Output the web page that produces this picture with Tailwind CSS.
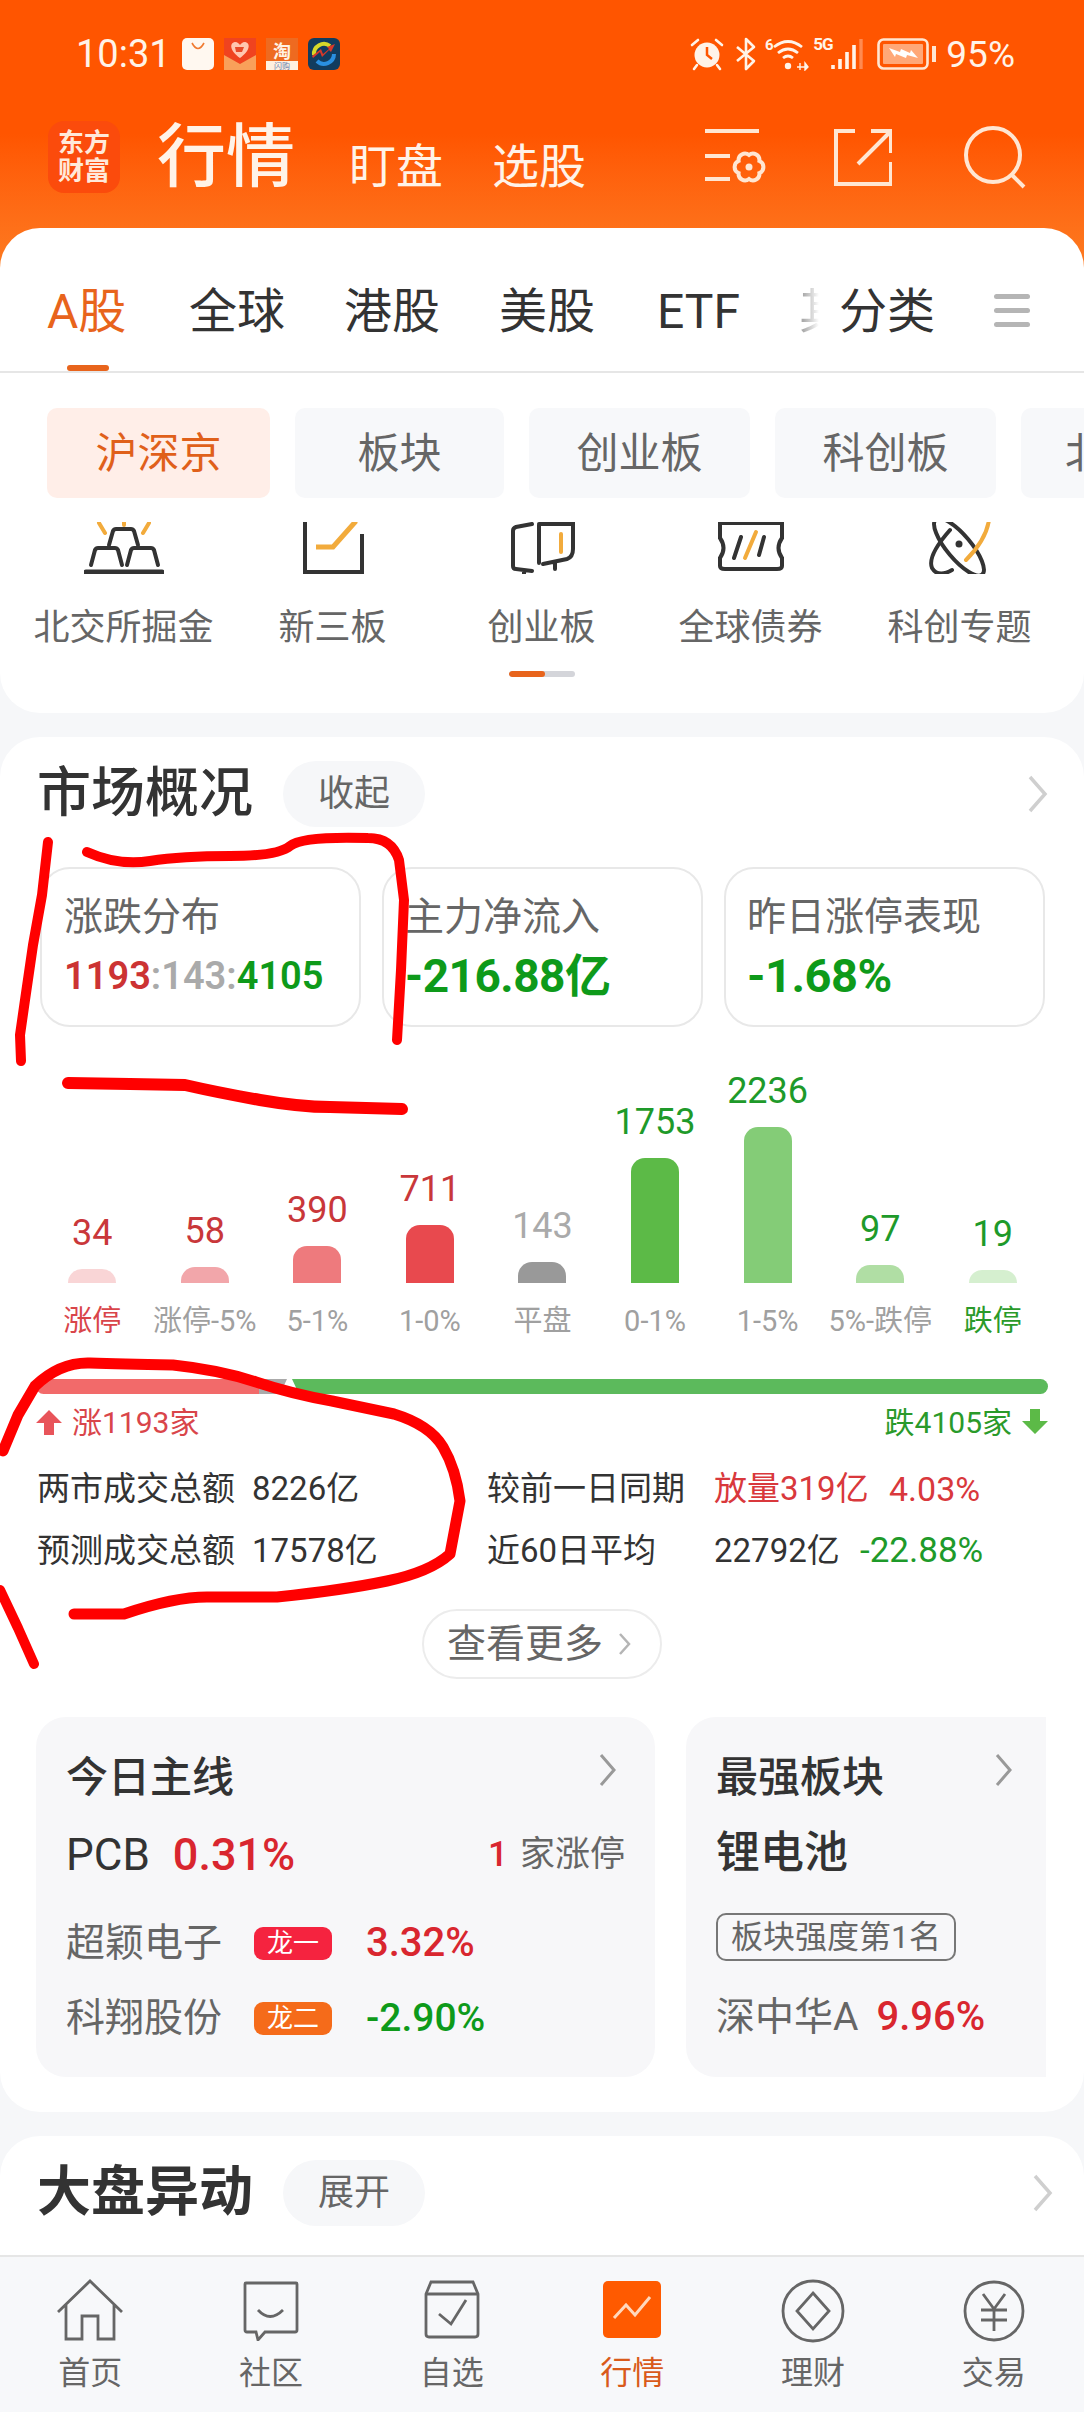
<!DOCTYPE html>
<html lang="zh-CN">
<head>
  <meta charset="UTF-8" />
  <title>行情</title>
  <script src="https://cdn.jsdelivr.net/npm/@tailwindcss/browser@4"></script>
</head>
<body class="bg-[#f6f7f9]">
<div class="relative w-[1084px] h-[2412px] overflow-hidden flex flex-col bg-[#f6f7f9] text-[#333] [font-family:Roboto,'Noto_Sans_CJK_SC',sans-serif]">

  <!-- orange header -->
  <div class="h-[268px] shrink-0 bg-linear-to-b from-[#ff5500] from-50% to-[#fd7a20] text-[#fff3e8]">
    <!-- status bar -->
    <div class="h-[108px] flex items-center pl-[76px]">
      <span class="text-[38px] leading-none w-[106px]">10:31</span>
      <div class="flex gap-[10px]">
        <svg width="32" height="32" viewBox="0 0 32 32"><rect width="32" height="32" rx="5" fill="#fff8f0"/><path d="M10 5q6 11 12 0" fill="none" stroke="#f07a30" stroke-width="1.6"/></svg>
        <svg width="32" height="32" viewBox="0 0 32 32"><path d="M0 0h32v32H0z" fill="#f0431f"/><path d="M0 17l16 9 16-9v15H0z" fill="#f9a05a"/><path d="M16 20C6 13 5 5 11 4c3 0 4 2 5 3 1-1 2-3 5-3 6 1 5 9-5 16z" fill="#ffc7b0"/><path d="M11 9h9l-2 5h-6z" fill="#e84a2a"/></svg>
        <svg width="32" height="32" viewBox="0 0 32 32"><rect width="32" height="32" fill="#ee6a20"/><rect y="23" width="32" height="9" fill="#fff0e0"/><text x="16" y="20" text-anchor="middle" font-size="18" font-weight="700" fill="#fff3e4">淘</text><text x="16" y="31" text-anchor="middle" font-size="8" fill="#6a7fb0">闪购</text></svg>
        <svg width="32" height="32" viewBox="0 0 32 32"><rect width="32" height="32" rx="6" fill="#123c5e"/><path d="M6 17A10 10 0 0 1 22 8" fill="none" stroke="#d6d92a" stroke-width="4"/><path d="M26 16A10 10 0 0 1 9 23" fill="none" stroke="#2a8fe0" stroke-width="4"/><path d="M5 20l7-6 2 5 7-7 2 2 4-8-8 3 2 2-6 5-2-5-9 7z" fill="#d8392a"/></svg>
      </div>
      <div class="ml-auto flex items-center pr-[69px]">
        <!-- alarm -->
        <svg width="34" height="34" viewBox="0 0 34 34" class="mr-[10px]"><circle cx="17" cy="18" r="12.5" fill="#fff3e8"/><path d="M17 10v8l5 4" fill="none" stroke="#ff5500" stroke-width="2.5"/><path d="M2 8l6-5M32 8l-6-5M7 28l-3 4M27 28l3 4" stroke="#fff3e8" stroke-width="2.6" stroke-linecap="round"/></svg>
        <!-- bluetooth -->
        <svg width="24" height="34" viewBox="0 0 24 34" class="mr-[7px]"><path d="M3 10l17 14-8 8V2l8 8L3 24" fill="none" stroke="#fff3e8" stroke-width="2.6" stroke-linejoin="round"/></svg>
        <!-- wifi -->
        <svg width="44" height="34" viewBox="0 0 44 34" class="mr-[4px]"><text x="0" y="13" font-size="15" font-weight="700" fill="#fff3e8">6</text><path d="M9 10q14-11 28 0M13 16q10-8 20 0M18 21q5-4 10 0" fill="none" stroke="#fff3e8" stroke-width="2.8"/><circle cx="23" cy="29" r="3.2" fill="#fff3e8"/><path d="M32 30h8M35 26v7M40 26l3 4-3 3z" stroke="#fff3e8" stroke-width="1.4" fill="#fff3e8"/></svg>
        <!-- signal -->
        <div class="relative w-[52px] h-[34px] mr-[12px]">
          <span class="absolute left-0 -top-[1px] text-[17px] leading-[17px] font-bold tracking-[-1px]">5G</span>
          <svg width="52" height="34" viewBox="0 0 52 34" class="absolute left-0 top-0"><path d="M20 28v4M27 22v10M34 15v17M41 8v24" stroke="#fff3e8" stroke-width="3.6"/><path d="M48 2v30" stroke="#ff8a50" stroke-width="3.4"/></svg>
        </div>
        <!-- battery -->
        <svg width="60" height="34" viewBox="0 0 60 34" class="mr-[9px]"><rect x="1.5" y="2.5" width="49" height="29" rx="5" fill="none" stroke="#ffe6d2" stroke-width="2.6"/><rect x="6" y="7" width="40" height="20" rx="1" fill="#ffa878"/><path d="M55 9h4v16h-4z" fill="#ffe6d2"/><path d="M12 11l11 4 1-3 9 4 1-3 7 8-11-3-1 3-10-4-1 3z" fill="#fff"/></svg>
        <span class="text-[37px] leading-none">95%</span>
      </div>
    </div>
    <!-- title row -->
    <div class="h-[90px] flex items-center pl-[48px] pt-[8px]">
      <div class="w-[72px] h-[72px] rounded-[16px] bg-[#fb4b0c] flex items-center justify-center text-center text-[26px] leading-[28px] font-bold text-[#ffe9da]">东方<br>财富</div>
      <span class="ml-[37px] text-[69px] leading-none font-medium">行情</span>
      <span class="ml-[54px] text-[47px] leading-none mt-[18px]">盯盘</span>
      <span class="ml-[49px] text-[47px] leading-none mt-[18px]">选股</span>
      <div class="ml-auto flex items-center pr-[58px] text-[#ffe6d2]">
        <svg width="64" height="58" viewBox="0 0 64 58" class="mr-[66px]" fill="none" stroke="#ffe6d2" stroke-width="4"><path d="M1 3h54M1 28h25M1 51h25"/><path d="M45 27A6.5 6.5 0 0 1 55.4 33A6.5 6.5 0 0 1 55.4 45A6.5 6.5 0 0 1 45 51A6.5 6.5 0 0 1 34.6 45A6.5 6.5 0 0 1 34.6 33A6.5 6.5 0 0 1 45 27Z"/><circle cx="45" cy="39" r="3.5" fill="#ffe6d2" stroke="none"/></svg>
        <svg width="58" height="58" viewBox="0 0 58 58" class="mr-[72px]" fill="none" stroke="#ffe6d2" stroke-width="4"><path d="M21 3H2v53h55V34"/><path d="M37 3h20v22M55 5L24 36"/></svg>
        <svg width="62" height="64" viewBox="0 0 62 64" fill="none" stroke="#ffe6d2" stroke-width="4"><circle cx="29" cy="30" r="27"/><path d="M48 50l12 12"/></svg>
      </div>
    </div>
  </div>

  <!-- market tabs card -->
  <section class="relative -mt-[40px] h-[485px] shrink-0 bg-white rounded-[40px] overflow-hidden">
    <div class="relative h-[145px] border-b-[2px] border-[#e6e6e6] flex items-start pl-[47px] pt-[55px] text-[48px] leading-[58px]">
      <span class="text-[#e8641c] w-[142px]">A股</span>
      <span class="w-[155px]">全球</span>
      <span class="w-[155px]">港股</span>
      <span class="w-[158px]">美股</span>
      <span class="w-[142px]">ETF</span>
      <span class="w-[40px] overflow-hidden bg-linear-to-r from-[#aaa] from-10% to-white to-50% bg-clip-text text-transparent">其</span>
      <span class="w-[155px]">分类</span>
      <div class="flex flex-col gap-[9px] w-[36px] mt-[11px]">
        <span class="h-[5px] rounded-full bg-[#b5b5b5]"></span>
        <span class="h-[5px] rounded-full bg-[#b5b5b5]"></span>
        <span class="h-[5px] rounded-full bg-[#b5b5b5]"></span>
      </div>
      <span class="absolute left-[67px] bottom-0 w-[42px] h-[6px] rounded-full bg-[#e8641c]"></span>
    </div>
    <div class="flex gap-[25px] pl-[47px] mt-[35px] text-[42px] text-[#666]">
      <div class="w-[223px] h-[90px] shrink-0 rounded-[10px] bg-[#ffeee8] text-[#e0601a] flex items-center justify-center">沪深京</div>
      <div class="w-[209px] h-[90px] shrink-0 rounded-[10px] bg-[#f7f8fa] flex items-center justify-center">板块</div>
      <div class="w-[221px] h-[90px] shrink-0 rounded-[10px] bg-[#f7f8fa] flex items-center justify-center">创业板</div>
      <div class="w-[221px] h-[90px] shrink-0 rounded-[10px] bg-[#f7f8fa] flex items-center justify-center">科创板</div>
      <div class="w-[221px] h-[90px] shrink-0 rounded-[10px] bg-[#f7f8fa] flex items-center pl-[44px]">北交所</div>
    </div>
    <div class="grid grid-cols-[209px_209px_209px_209px_209px] pl-[19px] mt-[24px] text-[36px] leading-[44px] text-[#666] text-center">
      <div class="flex flex-col items-center">
        <svg width="80" height="52" viewBox="0 0 80 52" fill="none" stroke="#333" stroke-width="4" stroke-linecap="round">
          <path d="M2 50h76" stroke-width="5"/>
          <path d="M7 43l4-15q1-2 3-2h17q2 0 3 2l4 15M43 43l4-15q1-2 3-2h17q2 0 3 2l4 15M25 23l4-14q1-2 3-2h15q2 0 3 2l4 14"/>
          <path d="M15 1l6 10M65 1l-6 10M40 0v3" stroke="#f2ab3c"/>
        </svg>
        <span class="mt-[32px]">北交所掘金</span>
      </div>
      <div class="flex flex-col items-center">
        <svg width="64" height="52" viewBox="0 0 64 52" fill="none" stroke="#333" stroke-width="4">
          <path d="M4 0v50h57V12"/>
          <path d="M15 25h17L55-1" stroke="#f2ab3c" stroke-width="5"/>
        </svg>
        <span class="mt-[32px]">新三板</span>
      </div>
      <div class="flex flex-col items-center">
        <svg width="68" height="52" viewBox="0 0 68 52" fill="none" stroke="#333" stroke-width="4" stroke-linecap="round">
          <path d="M24 2L8 5Q5 6 5 9v35q0 3 3 3l16 2M16 48v4"/>
          <path d="M31 3v38M31 2h34v25q0 8-6 10l-24 5M47 41v6"/>
          <path d="M53 12v18" stroke="#f2ab3c"/>
        </svg>
        <span class="mt-[32px]">创业板</span>
      </div>
      <div class="flex flex-col items-center">
        <svg width="68" height="52" viewBox="0 0 68 52" fill="none" stroke="#333" stroke-width="4" stroke-linecap="round">
          <path d="M3 1h62v15q-7 10 0 20v8q0 3-5 3H8q-5 0-5-3v-8q7-10 0-20z"/>
          <path d="M24 15l-7 21M47 15l-5 18"/>
          <path d="M39 10L28 36" stroke="#f2ab3c"/>
        </svg>
        <span class="mt-[32px]">全球债券</span>
      </div>
      <div class="flex flex-col items-center">
        <svg width="64" height="52" viewBox="0 0 64 52" fill="none" stroke="#333" stroke-width="4" stroke-linecap="round">
          <ellipse cx="31" cy="25" rx="12" ry="36" transform="rotate(-40 31 25)"/>
          <path d="M24 48Q10 56 4 46Q-1 34 22 8"/>
          <path d="M61-2Q58 18 38 38" stroke="#f2ab3c"/>
          <circle cx="31" cy="22" r="3.5" fill="#333" stroke="none"/>
        </svg>
        <span class="mt-[32px]">科创专题</span>
      </div>
    </div>
    <div class="ml-[509px] mt-[21px] flex w-[66px] h-[6px] rounded-full overflow-hidden bg-[#d4d5da]">
      <span class="w-[36px] rounded-full bg-[#e8641c]"></span>
    </div>
  </section>

  <!-- market overview card -->
  <section class="mt-[24px] h-[1375px] shrink-0 bg-white rounded-[40px] overflow-hidden">
    <div class="flex items-center h-[66px] mt-[24px] pl-[37px] pr-[36px]">
      <h2 class="text-[54px] leading-none font-medium">市场概况</h2>
      <span class="ml-[30px] w-[142px] h-[66px] rounded-full bg-[#f6f7f9] flex items-center justify-center text-[36px] text-[#666]">收起</span>
      <svg width="20" height="38" viewBox="0 0 20 38" class="ml-auto" fill="none" stroke="#cfcfcf" stroke-width="3.5"><path d="M2 2l15 17L2 36"/></svg>
    </div>

    <div class="flex gap-[21px] pl-[40px] mt-[40px]">
      <div class="w-[321px] h-[160px] rounded-[30px] border-[2px] border-[#e8e8e8] pl-[22px] pt-[23px]">
        <div class="text-[39px] leading-[50px] text-[#666]">涨跌分布</div>
        <div class="text-[38px] leading-[50px] mt-[9px] font-semibold"><span class="text-[#cc3333]">1193</span><span class="text-[#aaa]">:143:</span><span class="text-[#0e9a1a]">4105</span></div>
      </div>
      <div class="w-[321px] h-[160px] rounded-[30px] border-[2px] border-[#e8e8e8] pl-[21px] pt-[23px]">
        <div class="text-[39px] leading-[50px] text-[#666]">主力净流入</div>
        <div class="text-[46px] leading-[50px] mt-[9px] font-bold text-[#0e9a1a] tracking-[-0.5px]">-216.88亿</div>
      </div>
      <div class="w-[321px] h-[160px] rounded-[30px] border-[2px] border-[#e8e8e8] pl-[21px] pt-[23px]">
        <div class="text-[39px] leading-[50px] text-[#666]">昨日涨停表现</div>
        <div class="text-[47px] leading-[50px] mt-[9px] font-bold text-[#0e9a1a] tracking-[-0.5px]">-1.68%</div>
      </div>
    </div>

    <!-- bar chart -->
    <div class="grid grid-cols-9 w-[1013px] ml-[36px] h-[256px] items-end text-center text-[36px] leading-[36px]">
      <div class="flex flex-col items-center text-[#c9373a]"><span>34</span><span class="mt-[18px] w-[48px] h-[14px] rounded-t-[14px] bg-[#f9d5d6]"></span></div>
      <div class="flex flex-col items-center text-[#c9373a]"><span>58</span><span class="mt-[18px] w-[48px] h-[16px] rounded-t-[14px] bg-[#f2a6aa]"></span></div>
      <div class="flex flex-col items-center text-[#c9373a]"><span>390</span><span class="mt-[18px] w-[48px] h-[37px] rounded-t-[14px] bg-[#ee7a7d]"></span></div>
      <div class="flex flex-col items-center text-[#c9373a]"><span>711</span><span class="mt-[18px] w-[48px] h-[58px] rounded-t-[14px] bg-[#e8494e]"></span></div>
      <div class="flex flex-col items-center text-[#aaa]"><span>143</span><span class="mt-[18px] w-[48px] h-[21px] rounded-t-[14px] bg-[#999]"></span></div>
      <div class="flex flex-col items-center text-[#1e9a2a]"><span>1753</span><span class="mt-[18px] w-[48px] h-[125px] rounded-t-[14px] bg-[#5cba47]"></span></div>
      <div class="flex flex-col items-center text-[#1e9a2a]"><span>2236</span><span class="mt-[18px] w-[48px] h-[156px] rounded-t-[14px] bg-[#84cc77]"></span></div>
      <div class="flex flex-col items-center text-[#1e9a2a]"><span>97</span><span class="mt-[18px] w-[48px] h-[18px] rounded-t-[14px] bg-[#b0dea4]"></span></div>
      <div class="flex flex-col items-center text-[#1e9a2a]"><span>19</span><span class="mt-[18px] w-[48px] h-[13px] rounded-t-[14px] bg-[#d5efcf]"></span></div>
    </div>
    <div class="grid grid-cols-9 w-[1013px] ml-[36px] h-[78px] items-center text-center text-[29px] text-[#a0a0a0] whitespace-nowrap">
      <span class="text-[#d9454a]">涨停</span>
      <span>涨停-5%</span>
      <span>5-1%</span>
      <span>1-0%</span>
      <span>平盘</span>
      <span>0-1%</span>
      <span>1-5%</span>
      <span>5%-跌停</span>
      <span class="text-[#2a9a2a]">跌停</span>
    </div>

    <!-- ratio bar -->
    <div class="flex w-[1012px] h-[15px] ml-[36px] mt-[18px] rounded-full overflow-hidden">
      <span class="w-[223px] bg-[#f26a6a]"></span>
      <span class="w-[28px] bg-[#aaa] [clip-path:polygon(0_0,100%_0,75%_100%,0_100%)]"></span>
      <span class="flex-1 ml-[5px] bg-[#5cba5c] [clip-path:polygon(0_0,100%_0,100%_100%,7px_100%)]"></span>
    </div>
    <div class="flex items-center h-[34px] mt-[11px] px-[36px] text-[30px]">
      <svg width="26" height="26" viewBox="0 0 26 26" class="mr-[10px]"><path d="M13 1L26 14h-8v12H8V14H0z" fill="#e8545a"/></svg>
      <span class="text-[#d9454a]">涨1193家</span>
      <span class="ml-auto text-[#2a9a2a]">跌4105家</span>
      <svg width="26" height="26" viewBox="0 0 26 26" class="ml-[10px]"><path d="M13 25L26 12h-8V0H8v12H0z" fill="#5cba47"/></svg>
    </div>

    <!-- turnover stats -->
    <div class="mt-[19px] pl-[37px] text-[33px] text-[#333] whitespace-nowrap">
      <div class="flex items-center h-[62px]">
        <span class="w-[215px]">两市成交总额</span><span class="w-[235px]">8226亿</span>
        <span class="w-[227px]">较前一日同期</span><span class="w-[175px] text-[#d9383c]">放量319亿</span><span class="text-[34px] text-[#d9383c]">4.03%</span>
      </div>
      <div class="flex items-center h-[62px]">
        <span class="w-[215px]">预测成交总额</span><span class="w-[235px]">17578亿</span>
        <span class="w-[227px]">近60日平均</span><span class="w-[146px]">22792亿</span><span class="text-[35px] text-[#1e9a2a]">-22.88%</span>
      </div>
    </div>

    <div class="flex justify-center mt-[27px]">
      <div class="w-[240px] h-[70px] rounded-full border-[2px] border-[#ececec] flex items-center pl-[23px] text-[39px] text-[#666]">
        查看更多
        <svg width="14" height="24" viewBox="0 0 14 24" class="ml-[15px]" fill="none" stroke="#b5b5b5" stroke-width="2.5"><path d="M2 2l9 10-9 10"/></svg>
      </div>
    </div>

    <!-- sector cards -->
    <div class="flex gap-[31px] ml-[36px] mt-[38px] w-[1010px] overflow-hidden">
      <div class="w-[619px] h-[360px] shrink-0 rounded-[30px] bg-[#f7f7f9] pl-[30px] pr-[38px] pt-[30px]">
        <div class="flex items-center justify-between h-[60px]">
          <span class="text-[42px] font-medium">今日主线</span>
          <svg width="18" height="34" viewBox="0 0 18 34" class="-mt-[14px]" fill="none" stroke="#999" stroke-width="3"><path d="M2 2l13 15L2 32"/></svg>
        </div>
        <div class="flex items-center h-[60px] mt-[18px]">
          <span class="text-[44px]">PCB</span>
          <span class="ml-[23px] text-[45px] font-medium text-[#d9262f]">0.31%</span>
          <span class="ml-auto text-[35px] font-medium text-[#d9262f]">1</span>
          <span class="ml-[12px] text-[35px] text-[#666] -mr-[8px]">家涨停</span>
        </div>
        <div class="flex items-center h-[50px] mt-[33px]">
          <span class="text-[39px] text-[#666] w-[188px]">超颖电子</span>
          <span class="w-[78px] h-[33px] rounded-[9px] bg-[#f5233f] text-white text-[26px] leading-none flex items-center justify-center">龙一</span>
          <span class="ml-[34px] text-[40px] font-medium text-[#d9262f]">3.32%</span>
        </div>
        <div class="flex items-center h-[50px] mt-[25px]">
          <span class="text-[39px] text-[#666] w-[188px]">科翔股份</span>
          <span class="w-[78px] h-[33px] rounded-[9px] bg-[#f56b1a] text-white text-[26px] leading-none flex items-center justify-center">龙二</span>
          <span class="ml-[34px] text-[39px] font-medium text-[#0e9a1a]">-2.90%</span>
        </div>
      </div>
      <div class="w-[400px] h-[360px] shrink-0 rounded-[30px] bg-[#f7f7f9] pl-[30px] pt-[30px]">
        <div class="flex items-center justify-between h-[60px] w-[297px]">
          <span class="text-[42px] font-medium">最强板块</span>
          <svg width="18" height="34" viewBox="0 0 18 34" class="-mt-[14px]" fill="none" stroke="#999" stroke-width="3"><path d="M2 2l13 15L2 32"/></svg>
        </div>
        <div class="h-[60px] mt-[16px] flex items-center text-[44px] font-medium">锂电池</div>
        <div class="mt-[30px] w-[240px] h-[48px] rounded-[10px] border-[2px] border-[#777] flex items-center justify-center text-[32px] leading-none text-[#666] whitespace-nowrap">板块强度第1名</div>
        <div class="flex items-center h-[50px] mt-[31px]">
          <span class="text-[39px] text-[#666]">深中华A</span>
          <span class="ml-[18px] text-[40px] font-medium text-[#d9262f]">9.96%</span>
        </div>
      </div>
    </div>
  </section>

  <!-- market movers card, cut off by nav -->
  <section class="mt-[24px] flex-1 min-h-0 bg-white rounded-t-[40px] overflow-hidden pt-[24px] pl-[37px] pr-[31px]">
    <div class="flex items-center h-[66px]">
      <h2 class="text-[54px] leading-none font-bold">大盘异动</h2>
      <span class="ml-[30px] w-[142px] h-[66px] rounded-full bg-[#f6f7f9] flex items-center justify-center text-[36px] text-[#666]">展开</span>
      <svg width="20" height="38" viewBox="0 0 20 38" class="ml-auto" fill="none" stroke="#cfcfcf" stroke-width="3.5"><path d="M2 2l15 17L2 36"/></svg>
    </div>
  </section>

  <!-- bottom nav -->
  <nav class="h-[157px] shrink-0 grid grid-cols-6 border-t-[2px] border-[#e6e6e6] bg-[#f7f8fa] pt-[22px] text-center text-[32px] leading-[40px] text-[#666]">
    <div class="flex flex-col items-center">
      <svg width="70" height="62" viewBox="0 0 70 62" fill="none" stroke="#666" stroke-width="2.8"><path d="M3 33L35 2l32 31M11 25v35h16V37h16v23h16V25"/></svg>
      <span class="mt-[12px]">首页</span>
    </div>
    <div class="flex flex-col items-center">
      <svg width="60" height="62" viewBox="0 0 60 62" fill="none" stroke="#666" stroke-width="2.8"><path d="M5 4h50a1 1 0 0 1 1 1v46q0 2-2 2H24l-7 8-2-8H6q-2 0-2-2V5a1 1 0 0 1 1-1z"/><path d="M17 31q12 13 25 0"/></svg>
      <span class="mt-[12px]">社区</span>
    </div>
    <div class="flex flex-col items-center">
      <svg width="60" height="62" viewBox="0 0 60 62" fill="none" stroke="#666" stroke-width="2.8"><path d="M4 15L9 3h42l5 12v40q0 3-3 3H7q-3 0-3-3z"/><path d="M4 15h52"/><path d="M17 35l12 10 15-24"/></svg>
      <span class="mt-[12px]">自选</span>
    </div>
    <div class="flex flex-col items-center text-[#d95a1a]">
      <svg width="60" height="62" viewBox="0 0 60 62"><rect x="1" y="2" width="58" height="57" rx="5" fill="#ff5a00"/><path d="M12 39l12-13 9 10 15-18" fill="none" stroke="#ffd8bd" stroke-width="3"/></svg>
      <span class="mt-[12px]">行情</span>
    </div>
    <div class="flex flex-col items-center">
      <svg width="66" height="64" viewBox="0 0 66 64" fill="none" stroke="#666" stroke-width="2.8"><ellipse cx="33" cy="32" rx="30" ry="30"/><path d="M33 14l16 18-16 18-16-18z"/></svg>
      <span class="mt-[10px]">理财</span>
    </div>
    <div class="flex flex-col items-center">
      <svg width="64" height="64" viewBox="0 0 64 64" fill="none" stroke="#666" stroke-width="2.8"><circle cx="32" cy="32" r="29"/><path d="M21 15l11 15 11-15M19 31h26M19 41h26M32 30v22"/></svg>
      <span class="mt-[10px]">交易</span>
    </div>
  </nav>

  <!-- red marker scribbles on top of the screenshot -->
  <svg class="absolute left-0 top-0 pointer-events-none" width="1084" height="2412" viewBox="0 0 1084 2412" fill="none" stroke="#ff0000" stroke-width="10" stroke-linecap="round" stroke-linejoin="round">
    <path d="M48 842L42 895 33 945 25 1000 20 1035 21 1061"/>
    <path d="M87 852Q118 866 150 861T230 856T290 846T368 838Q392 838 399 860L404 900 401 970 397 1040"/>
    <path d="M68 1083L130 1084 185 1085Q220 1093 260 1100T330 1107L402 1109" stroke-width="12"/>
    <path d="M3 1451L18 1415 35 1386Q60 1362 90 1363T173 1365Q220 1370 256 1382T332 1401L394 1414Q430 1425 443 1447T460 1501L450 1554Q430 1572 387 1581T277 1597Q240 1597 207 1597T124 1614L74 1614" stroke-width="11"/>
    <path d="M0 1590L18 1628 34 1664"/>
  </svg>
</div>
</body>
</html>
